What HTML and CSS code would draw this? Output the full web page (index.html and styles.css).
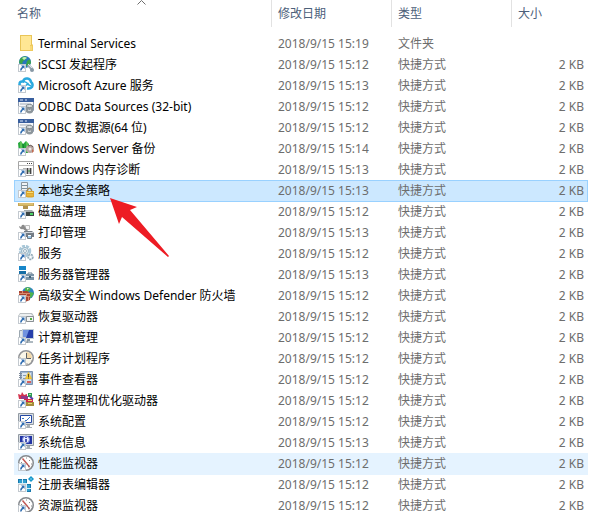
FILE: index.html
```html
<!DOCTYPE html>
<html lang="zh-CN">
<head>
<meta charset="utf-8">
<title>管理工具</title>
<link rel="stylesheet" href="styles.css">
</head>
<body>
<svg class="defs" aria-hidden="true">
  <symbol id="link" viewBox="0 0 16 18">
    <path d="M0 8h8v8H0z" fill="#c3c9cf"/><path d="M1 9h6v6H1z" fill="#fff"/>
    <path d="M3 9.500h3.500V13l-1.200-1.200Q4 12.800 3.500 14.500H2q.2-2.500 2.200-3.800z" fill="#2e6cb0"/>
  </symbol>
  <symbol id="folder" viewBox="0 0 16 18">
    <path d="M2 0h12v9l1 1v6H2z" fill="#e9c558"/><path d="M3 1h10v14H3z" fill="#ffe794"/><path d="M12 10h3v6h-3z" fill="#efca5d"/><path d="M13 11v4" stroke="#ffe794"/>
  </symbol>
  <symbol id="iscsi" viewBox="0 0 16 18">
    <circle cx="7" cy="6" r="6" fill="#2877bd"/><path d="M2 3Q5-.5 9 1L7 4 5 5 4 8 1 7zM9 5l3-2 1 4-3 4-2-2z" fill="#3ba54a"/><path d="M4 2q3-2 5 0L6 4z" fill="#c5efb7"/>
    <path d="M10 9l4 4" stroke="#9aa9b4" stroke-width="3"/><path d="M10 8l4 4" stroke="#dce4e9"/><circle cx="14" cy="14" r="2" fill="#8798a5"/>
  </symbol>
  <symbol id="azure" viewBox="0 0 16 18">
    <path d="M4 9.500Q1 8.500 1.500 6.500 2 4 5 4.500 6 1 9.500 1.500 12.500 2 13 5q2.500 2 1 5-1.500 2-5 1.500" fill="#fff" stroke="#2aa9df" stroke-width="2.500"/><path d="M6 4.500q3 .5 4 3l3 1.500M8 8.500l2.500-2.500" fill="none" stroke="#2aa9df" stroke-width="1.500"/>
  </symbol>
  <symbol id="odbc" viewBox="0 0 16 18">
    <path d="M.5.500h15v12H.5z" fill="#f5f7fa" stroke="#8a98ad"/><path d="M0 0h16v4H0z" fill="#385e9e"/><path d="M2 2h3m2 0h2" stroke="#d9e6fa"/><path d="M2 6h11" stroke="#a3adba"/>
    <path d="M8 8v6q3.500 3 7 0V8" fill="#8d969c"/><ellipse cx="11.500" cy="8" rx="3.500" ry="1.500" fill="#dde1e3" stroke="#7d868b"/><path d="M10 12q1.500 1 3 0" stroke="#e6eaec" fill="none"/>
  </symbol>
  <symbol id="backup" viewBox="0 0 16 18">
    <path d="M0 3l3-2 2 3 3-3 3 3-1 9H1z" fill="#27a83d"/><path d="M3 2v6m6-6v10" stroke="#8fdc6a"/><path d="M5 4l1 8" stroke="#107a2a"/>
    <circle cx="12" cy="9" r="4" fill="#b8a7a2"/><path d="M10 6q3-2 5 1" fill="none" stroke="#645855"/><circle cx="12" cy="9" r="1.500" fill="#ece8e6"/><path d="M14 9l2 2-2 2z" fill="#c46a51"/>
  </symbol>
  <symbol id="memory" viewBox="0 0 16 18">
    <path d="M.5.500h15v14H.5z" fill="#fff" stroke="#a5a5a5"/><path d="M1 4.500h14" stroke="#bbb"/><path d="M9 2.500h1m1 0h1m1 0h1" stroke="#444"/><path d="M5 7h9v6H5z" fill="#b4b4b4"/><path d="M9.500 7v6m3-6v6" stroke="#444"/><path d="M10 9h2v2h-2z" fill="#74a878"/>
  </symbol>
  <symbol id="security" viewBox="0 0 16 18">
    <path d="M3.500.500h6v9h-6z" fill="#f0f3f5" stroke="#8d979f"/><path d="M4 3.500h5M4 6.500h5" stroke="#7d919f"/><path d="M1 8.500h8" stroke="#8d979f"/>
    <path d="M9.500 10V8q2-3.500 4 0v2" fill="none" stroke="#a2895a" stroke-width="1.500"/><path d="M8 9h8v6q-4 1-8 0z" fill="#dba52e"/><path d="M9 10h6v1H9z" fill="#f8dd75"/><path d="M9 13h6" stroke="#f1c54c"/>
  </symbol>
  <symbol id="disk" viewBox="0 0 16 18">
    <path d="M0 0h16v3H0z" fill="#c8a856"/><path d="M1 1h14" stroke="#ecd38f"/><path d="M5 3h5v3H5z" fill="#b1924f"/><path d="M6 7h8l2 2v4H6z" fill="#a5acae"/><path d="M8 9h8v4H8z" fill="#3d4645"/><path d="M12 11h3" stroke="#4dd466" stroke-width="2"/>
  </symbol>
  <symbol id="printer" viewBox="0 0 16 18">
    <path d="M7.500 1.500h4v4h-4z" fill="#f7f7f7" stroke="#bbb"/><path d="M1 2l2 1 1-2q3-1 3 2l3 4-1 1-4-3q-3 1-4-3z" fill="#8b8b8b"/><path d="M6 7h8l2 2v4H6z" fill="#747d86"/><path d="M8 8h7v1H8z" fill="#d2d7dc"/><path d="M9.500 10.500h4v4h-4z" fill="#fff" stroke="#6d7883"/><path d="M10 13h3" stroke="#3a8ecd"/>
  </symbol>
  <symbol id="services" viewBox="0 0 16 18">
    <circle cx="7" cy="6" r="5" fill="none" stroke="#a9c8d9" stroke-width="2.500" stroke-dasharray="3 1"/><circle cx="7" cy="6" r="3.500" fill="#e7f0f5" stroke="#8fb0c3"/><circle cx="7" cy="6" r="1.500" fill="#fff" stroke="#9ab1bf"/>
    <circle cx="12.500" cy="12" r="2.500" fill="#d9e4ea" stroke="#92a8b5" stroke-width="1.500" stroke-dasharray="2 1"/><circle cx="12.500" cy="12" r="1" fill="#fff"/>
  </symbol>
  <symbol id="server" viewBox="0 0 16 18">
    <path d="M1 0h7v4H1z" fill="#1786c9"/><path d="M1 5h7v4H1z" fill="#156da5"/><path d="M10 8.500V7h4v1.500" fill="none" stroke="#6b8193"/><path d="M8 8h8v6H8z" fill="#7893a7"/><path d="M8 10.500h8" stroke="#dce6ed"/><path d="M11 10h2v2h-2z" fill="#3e5f76"/>
  </symbol>
  <symbol id="firewall" viewBox="0 0 16 18">
    <circle cx="10" cy="6" r="6" fill="#2e82c5"/><path d="M7 1q4-2 6 1l-3 3-3-1zM12 5l4 1-3 5-2-1z" fill="#4eb34b"/><path d="M9 1h2L9 3z" fill="#e4f6d3"/><path d="M1 4l8 0 3 2v7l-5 2-6-2z" fill="#a84433"/><path d="M1 6.500h11M7 9.500h5" stroke="#d98b6e"/><path d="M4.500 4v3m4 0v3m2 0v3" stroke="#d98b6e"/>
  </symbol>
  <symbol id="recovery" viewBox="0 0 16 18">
    <path d="M2 5h12l2 3v6H0V8z" fill="#b9bec1"/><path d="M2 6h11l2 2H1z" fill="#eceff0"/><path d="M8.500 8.500h7v5h-7z" fill="#f2f4f4" stroke="#8a9195"/><path d="M12 10h2v2h-2z" fill="#51ae42"/>
  </symbol>
  <symbol id="computer" viewBox="0 0 16 18">
    <path d="M1.500 1.500h3v9h-3z" fill="#dde4e9" stroke="#9ba7b0"/><path d="M4 0h12v10H4z" fill="#c2ced7"/><path d="M5 1h10v8H5z" fill="#263faa"/><path d="M5 1h6L8 9H5z" fill="#7193df"/><path d="M9 10h3v2h3v2H8z" fill="#8997a2"/><path d="M10 13h5" stroke="#d1dade"/>
  </symbol>
  <symbol id="clock" viewBox="0 0 16 18">
    <circle cx="8" cy="8" r="7.250" fill="#faf6e8" stroke="#929498" stroke-width="1.500"/><path d="M8 8V2q6 0 6 6z" fill="#f3d9aa"/><path d="M8.500 3v5.500H13" fill="none" stroke="#5b6066"/><path d="M2 8h1m10 3h1M9 13v1" stroke="#999"/>
  </symbol>
  <symbol id="event" viewBox="0 0 16 18">
    <path d="M2.500.500h12v13h-12z" fill="#9fb6d0" stroke="#7c93b0"/><path d="M4 2h9v10H4z" fill="#dce6ef"/><path d="M1 2.500h3M1 4.500h3M1 6.500h3" stroke="#7c8999"/><path d="M5 4.500h3m-3 3h3" stroke="#819ab4"/><path d="M10.500 1l3.500 7H7z" fill="#f5cb35" stroke="#c9a746" stroke-width=".5"/><path d="M10.500 3v3m0 .5v1" stroke="#5e4d23"/><path d="M9 10h4v2H9z" fill="#d8605b"/>
  </symbol>
  <symbol id="defrag" viewBox="0 0 16 18">
    <path d="M0 2l3 1 1-3 2 3 3-1v5H1z" fill="#d3344f"/><path d="M3 4h7v3H3z" fill="#93398a"/><path d="M10 1h4v4h-4z" fill="#2f9a53"/><path d="M11 2.500h2" stroke="#a1dfa8"/><path d="M6 7h9v3H6z" fill="#d42545"/><path d="M8 10h8v4H8z" fill="#a58c3b"/><path d="M10 8.500h4m-4 3h4" stroke="#ead36e"/><path d="M12 5l3 2" stroke="#5b3dab" stroke-width="2"/>
  </symbol>
  <symbol id="config" viewBox="0 0 16 18">
    <path d="M.5.500h15v11H.5z" fill="#d6dce2" stroke="#929aa2"/><path d="M2.500 2.500h11v7h-11z" fill="#fff" stroke="#2348a4"/><path d="M4 5.500h2M7 7l1 1 4-4" fill="none" stroke="#3a75c4"/><path d="M9 12h3v2h2v1H8z" fill="#a5aeb5"/>
  </symbol>
  <symbol id="info" viewBox="0 0 16 18">
    <path d="M.5.500h15v11H.5z" fill="#d6dce2" stroke="#929aa2"/><path d="M2 2h12v8H2z" fill="#2234a4"/><circle cx="8" cy="5.500" r="3.500" fill="#e9edff" stroke="#7485da"/><path d="M8 3v1m0 1v3" stroke="#152597" stroke-width="1.500"/><path d="M9 12h3v2h2v1H8z" fill="#a5aeb5"/>
  </symbol>
  <symbol id="gauge" viewBox="0 0 16 18">
    <circle cx="8" cy="8" r="7.250" fill="#fff" stroke="#85898d" stroke-width="1.500"/><path d="M3 7.500h1M8.500 2.500v1M12 5l-1 1m3 3h-1" stroke="#888"/><path d="M4.500 3.500L10 10" stroke="#c25a56" stroke-width="1.500"/><path d="M9 9l3 2-1 2z" fill="#9b4643"/>
  </symbol>
  <symbol id="registry" viewBox="0 0 16 18">
    <path d="M0 3h9v5h4v8H8V8H0z" fill="#1778ad"/><path d="M1 4h3v3H1zm4 0h3v3H5zm4 5h3v3H9zm0 4h3v2H9z" fill="#2f9fd0"/><path d="M0 7.500h9M4.500 3v5m4 0v8M8 12.500h5" stroke="#d7effa"/><path d="M13 0l3 3-3 3-3-3z" fill="#1596ca"/><path d="M13 2v2" stroke="#8bd5ed"/>
  </symbol>
</svg>

<main class="explorer">
<table class="files">
  <thead>
    <tr class="row head"><th class="name" scope="col" aria-sort="ascending">名称<svg class="sort" viewBox="0 0 9 5" aria-hidden="true"><path d="M.5 4.500l4-4 4 4" fill="none" stroke="#6d6d6d"/></svg></th><th scope="col">修改日期</th><th scope="col">类型</th><th scope="col">大小</th></tr>
  </thead>
  <tbody>
    <tr class="row"><td class="name"><svg class="icon"><use href="#folder"/></svg>Terminal Services</td><td>2018/9/15 15:19</td><td>文件夹</td><td class="size"></td></tr>
    <tr class="row"><td class="name"><svg class="icon"><use href="#iscsi"/><use href="#link"/></svg>iSCSI 发起程序</td><td>2018/9/15 15:12</td><td>快捷方式</td><td class="size">2 KB</td></tr>
    <tr class="row"><td class="name"><svg class="icon"><use href="#azure"/><use href="#link"/></svg>Microsoft Azure 服务</td><td>2018/9/15 15:13</td><td>快捷方式</td><td class="size">2 KB</td></tr>
    <tr class="row"><td class="name"><svg class="icon"><use href="#odbc"/><use href="#link"/></svg>ODBC Data Sources (32-bit)</td><td>2018/9/15 15:12</td><td>快捷方式</td><td class="size">2 KB</td></tr>
    <tr class="row"><td class="name"><svg class="icon"><use href="#odbc"/><use href="#link"/></svg>ODBC 数据源(64 位)</td><td>2018/9/15 15:12</td><td>快捷方式</td><td class="size">2 KB</td></tr>
    <tr class="row"><td class="name"><svg class="icon"><use href="#backup"/><use href="#link"/></svg>Windows Server 备份</td><td>2018/9/15 15:14</td><td>快捷方式</td><td class="size">2 KB</td></tr>
    <tr class="row"><td class="name"><svg class="icon"><use href="#memory"/><use href="#link"/></svg>Windows 内存诊断</td><td>2018/9/15 15:13</td><td>快捷方式</td><td class="size">2 KB</td></tr>
    <tr class="row selected" aria-selected="true"><td class="name"><svg class="icon"><use href="#security"/><use href="#link"/></svg>本地安全策略</td><td>2018/9/15 15:13</td><td>快捷方式</td><td class="size">2 KB</td></tr>
    <tr class="row"><td class="name"><svg class="icon"><use href="#disk"/><use href="#link"/></svg>磁盘清理</td><td>2018/9/15 15:12</td><td>快捷方式</td><td class="size">2 KB</td></tr>
    <tr class="row"><td class="name"><svg class="icon"><use href="#printer"/><use href="#link"/></svg>打印管理</td><td>2018/9/15 15:13</td><td>快捷方式</td><td class="size">2 KB</td></tr>
    <tr class="row"><td class="name"><svg class="icon"><use href="#services"/><use href="#link"/></svg>服务</td><td>2018/9/15 15:12</td><td>快捷方式</td><td class="size">2 KB</td></tr>
    <tr class="row"><td class="name"><svg class="icon"><use href="#server"/><use href="#link"/></svg>服务器管理器</td><td>2018/9/15 15:13</td><td>快捷方式</td><td class="size">2 KB</td></tr>
    <tr class="row"><td class="name"><svg class="icon"><use href="#firewall"/><use href="#link"/></svg>高级安全 Windows Defender 防火墙</td><td>2018/9/15 15:12</td><td>快捷方式</td><td class="size">2 KB</td></tr>
    <tr class="row"><td class="name"><svg class="icon"><use href="#recovery"/><use href="#link"/></svg>恢复驱动器</td><td>2018/9/15 15:12</td><td>快捷方式</td><td class="size">2 KB</td></tr>
    <tr class="row"><td class="name"><svg class="icon"><use href="#computer"/><use href="#link"/></svg>计算机管理</td><td>2018/9/15 15:12</td><td>快捷方式</td><td class="size">2 KB</td></tr>
    <tr class="row"><td class="name"><svg class="icon"><use href="#clock"/><use href="#link"/></svg>任务计划程序</td><td>2018/9/15 15:12</td><td>快捷方式</td><td class="size">2 KB</td></tr>
    <tr class="row"><td class="name"><svg class="icon"><use href="#event"/><use href="#link"/></svg>事件查看器</td><td>2018/9/15 15:12</td><td>快捷方式</td><td class="size">2 KB</td></tr>
    <tr class="row"><td class="name"><svg class="icon"><use href="#defrag"/><use href="#link"/></svg>碎片整理和优化驱动器</td><td>2018/9/15 15:12</td><td>快捷方式</td><td class="size">2 KB</td></tr>
    <tr class="row"><td class="name"><svg class="icon"><use href="#config"/><use href="#link"/></svg>系统配置</td><td>2018/9/15 15:12</td><td>快捷方式</td><td class="size">2 KB</td></tr>
    <tr class="row"><td class="name"><svg class="icon"><use href="#info"/><use href="#link"/></svg>系统信息</td><td>2018/9/15 15:13</td><td>快捷方式</td><td class="size">2 KB</td></tr>
    <tr class="row hovered"><td class="name"><svg class="icon"><use href="#gauge"/><use href="#link"/></svg>性能监视器</td><td>2018/9/15 15:12</td><td>快捷方式</td><td class="size">2 KB</td></tr>
    <tr class="row"><td class="name"><svg class="icon"><use href="#registry"/><use href="#link"/></svg>注册表编辑器</td><td>2018/9/15 15:12</td><td>快捷方式</td><td class="size">2 KB</td></tr>
    <tr class="row"><td class="name"><svg class="icon"><use href="#gauge"/><use href="#link"/></svg>资源监视器</td><td>2018/9/15 15:12</td><td>快捷方式</td><td class="size">2 KB</td></tr>
  </tbody>
</table>
<svg class="pointer" viewBox="0 0 60 60" aria-hidden="true"><path d="M0 0l27 9-7 3 39 46-1 1L12 19l-3 7z" fill="#ed1c24"/></svg>
</main>
</body>
</html>
```
FILE: styles.css
```css
* { box-sizing: border-box; }

body {
  margin: 0;
  background: #fff;
  font: 12px/14px "Noto Sans", "Noto Sans CJK SC", sans-serif;
  color: #6d6d6d;
}

.defs { display: none; }

.explorer {
  position: relative;
  height: 100vh;
  overflow: hidden;
  padding: 0 3px 0 14px;
}

.files,
.files thead,
.files tbody { display: block; }

.row {
  display: grid;
  grid-template-columns: 257px 120px 120px 1fr;
  align-items: center;
  height: 22px;
  margin-bottom: -1px;
  border: 1px solid transparent;
  border-width: 1px 0;
}

.row td,
.row th {
  padding: 0 4px 0 7px;
  text-align: left;
  font-weight: 400;
  white-space: nowrap;
}

.row .name {
  display: flex;
  align-items: center;
  gap: 4px;
  padding-left: 4px;
  color: #000;
}

.row .size { text-align: right; }

.icon {
  flex: none;
  width: 16px;
  height: 18px;
}

.row.head {
  align-items: stretch;
  height: 27px;
  margin-bottom: 6px;
  border: 0;
}

.head th {
  padding: 6px 6px 0;
  border-left: 1px solid #e2e2e2;
  line-height: 16px;
  color: #4c607a;
}

.head .name {
  position: relative;
  padding: 0 3px;
  border-left: 0;
  color: #4c607a;
}

.sort {
  position: absolute;
  top: 0;
  left: 123px;
  width: 9px;
  height: 5px;
}

.selected {
  background: #cce8ff;
  border-color: #99d1ff;
  box-shadow: inset 1px 0 #99d1ff, inset -1px 0 #99d1ff;
}

.hovered { background: #e5f3ff; }

.pointer {
  position: absolute;
  top: 198px;
  left: 110px;
  width: 60px;
  height: 60px;
}
```
